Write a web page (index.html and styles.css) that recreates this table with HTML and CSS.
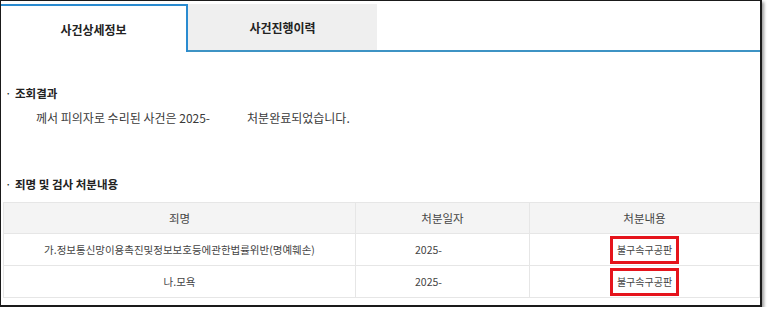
FILE: index.html
```html
<!DOCTYPE html>
<html>
<head>
    <meta charset="utf-8">
    <title>사건상세정보</title>
    <link rel="stylesheet" href="styles.css">
</head>
<body>
    <div class="frame">
        <div class="tabs">
            <div class="tab tab-on">사건상세정보</div>
            <div class="tab-rest">
                <div class="tab tab-off">사건진행이력</div>
            </div>
        </div>

        <h2 class="sec-title first">조회결과</h2>
        <p class="result">께서 피의자로 수리된 사건은 2025-<span class="blank"></span>처분완료되었습니다.</p>

        <h2 class="sec-title second">죄명 및 검사 처분내용</h2>
        <table class="result-table">
            <colgroup>
                <col class="c-name">
                <col class="c-date">
                <col class="c-disp">
            </colgroup>
            <thead>
                <tr>
                    <th>죄명</th>
                    <th>처분일자</th>
                    <th>처분내용</th>
                </tr>
            </thead>
            <tbody>
                <tr>
                    <td>가.정보통신망이용촉진및정보보호등에관한법률위반(명예훼손)</td>
                    <td>2025-<span class="blank-date"></span></td>
                    <td><span class="mark">불구속구공판</span></td>
                </tr>
                <tr>
                    <td>나.모욕</td>
                    <td>2025-<span class="blank-date"></span></td>
                    <td><span class="mark">불구속구공판</span></td>
                </tr>
            </tbody>
        </table>
    </div>
</body>
</html>
```

FILE: styles.css
```css
body {
    margin: 0;
    background: #fff;
    font-family: "Noto Sans CJK KR", "Noto Sans", sans-serif;
    color: #333;
}
.frame {
    box-sizing: border-box;
    width: 762px;
    height: 307px;
    border: 1px solid #1a1a1a;
    border-right-width: 2px;
    border-bottom-width: 2px;
    box-shadow: 2px 2px 3px rgba(0, 0, 0, 0.4);
    background: #fff;
}

/* tabs */
.tabs {
    display: flex;
    margin-top: 3px;
    height: 48px;
}
.tab {
    box-sizing: border-box;
    display: flex;
    align-items: center;
    justify-content: center;
    font-size: 12px;
    font-weight: bold;
    color: #222;
}
.tab-on {
    width: 187px;
    height: 48px;
    border-top: 2px solid #2a8bd0;
    border-right: 2px solid #2a8bd0;
    background: #fff;
}
.tab-rest {
    flex: 1;
    box-sizing: border-box;
    height: 48px;
    border-bottom: 2px solid #3d93c4;
}
.tab-off {
    width: 189px;
    height: 46px;
    background: #efefef;
}

/* sections */
.sec-title {
    margin: 0;
    padding-left: 4px;
    font-size: 11.5px;
    font-weight: bold;
    line-height: 16px;
    color: #222;
}
.sec-title::before {
    content: "·";
    display: inline-block;
    width: 10px;
    font-weight: normal;
}
.sec-title.first {
    margin-top: 33px;
}
.sec-title.second {
    margin-top: 50px;
}
.result {
    margin: 9px 0 0;
    padding-left: 35px;
    font-size: 12px;
    line-height: 16px;
    color: #3a3a3a;
}
.blank {
    display: inline-block;
    width: 37px;
}

/* table */
.result-table {
    margin: 10px 0 0 2px;
    width: 756px;
    border-collapse: collapse;
    table-layout: fixed;
    font-size: 10.5px;
    color: #444;
}
.c-name { width: 352px; }
.c-date { width: 174px; }
.c-disp { width: 230px; }
.result-table th,
.result-table td {
    border: 1px solid #e6e6e6;
    text-align: center;
    padding: 0;
}
.result-table th {
    height: 30px;
    background: #f4f4f4;
    font-weight: normal;
    font-size: 11.5px;
    color: #444;
}
.result-table td {
    height: 31px;
}
.blank-date {
    display: inline-block;
    width: 28px;
}
.mark {
    display: inline-block;
    border: 3px solid #e5141c;
    padding: 0 4px;
    font-size: 10px;
    line-height: 22px;
}
```
